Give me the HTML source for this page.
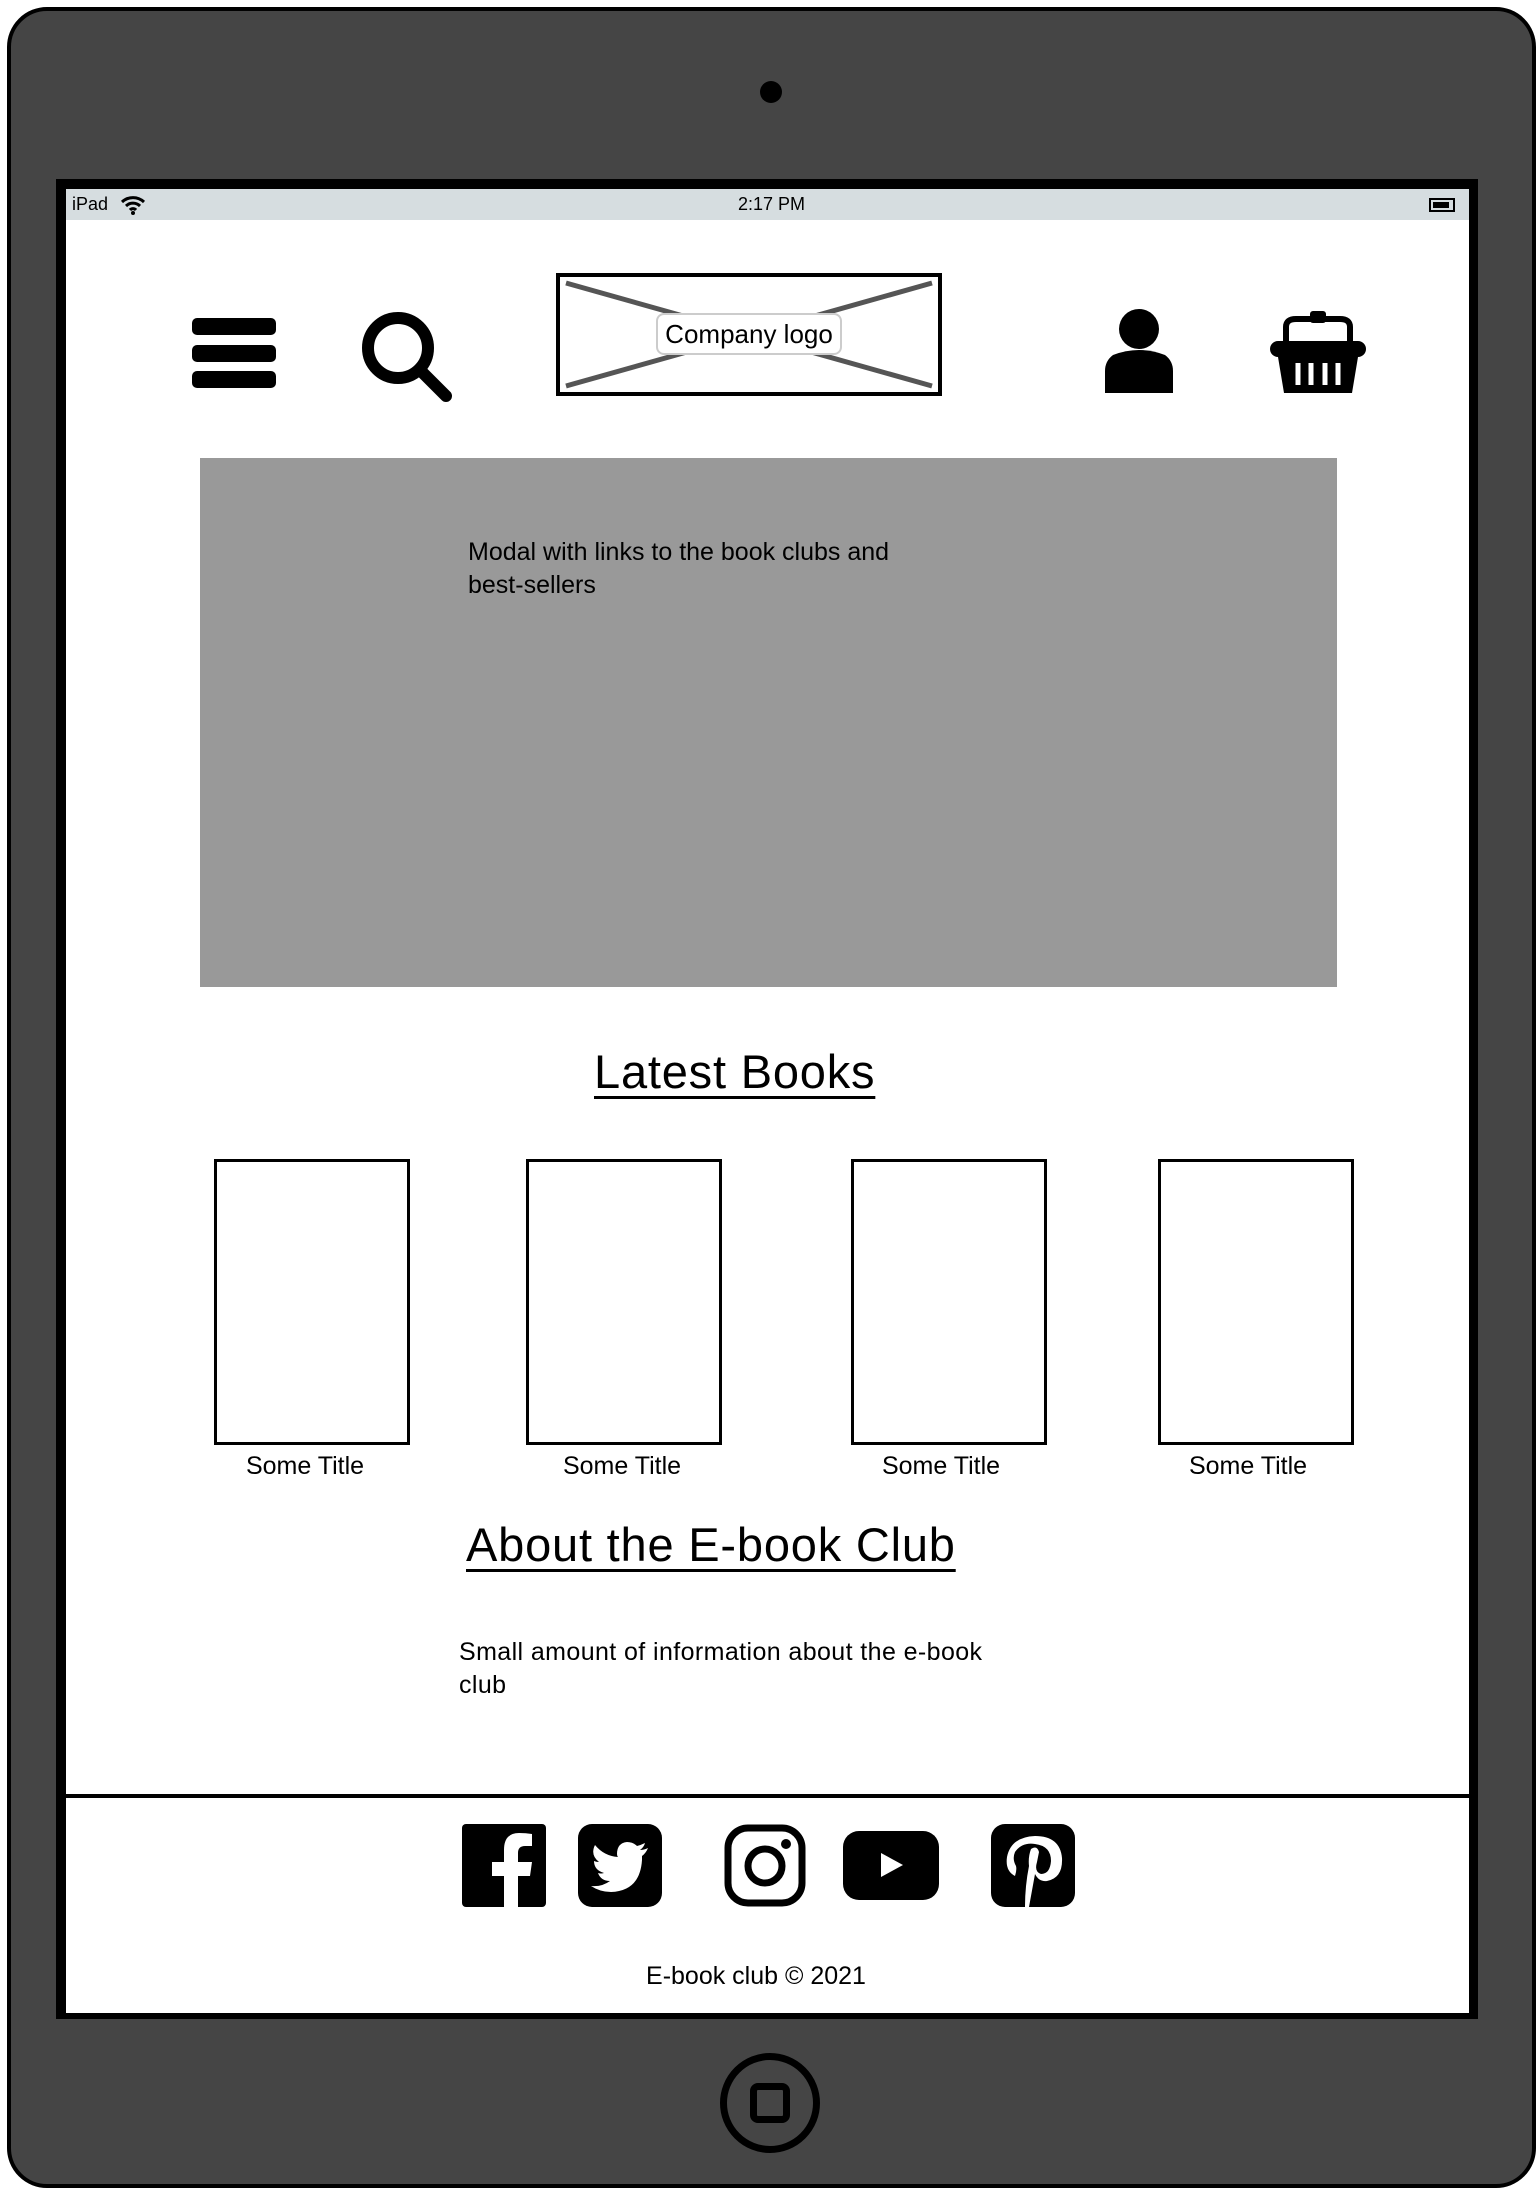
<!DOCTYPE html>
<html><head><meta charset="utf-8"><style>
*{margin:0;padding:0;box-sizing:border-box}
body{width:1540px;height:2192px;background:#fff;position:relative;overflow:hidden;font-family:"Liberation Sans",sans-serif;color:#000}
.a{position:absolute}
.book{position:absolute;top:1159px;width:196px;height:286px;border:3px solid #000;background:#fff}
.t{position:absolute;top:1452px;font-size:25px;width:196px;text-align:center}
h2{position:absolute;font-weight:normal;text-decoration:underline;text-underline-offset:8px;text-decoration-thickness:3px;white-space:nowrap;letter-spacing:0.8px}
</style></head><body>
<div class="a" style="left:7px;top:7px;width:1529px;height:2181px;background:#454545;border:4px solid #000;border-radius:40px"></div>
<div class="a" style="left:760px;top:81px;width:22px;height:22px;border-radius:50%;background:#000"></div>
<div class="a" style="left:56px;top:179px;width:1422px;height:1840px;background:#000"></div>
<div class="a" style="left:66px;top:189px;width:1403px;height:1824px;background:#fff"></div>
<div class="a" style="left:66px;top:189px;width:1403px;height:31px;background:#d6dde0;font-size:18px;line-height:31px">
<span class="a" style="left:6px">iPad</span>
<svg class="a" style="left:54px;top:6px" width="26" height="20" viewBox="0 0 26 20"><path d="M2 7a16 16 0 0 1 22 0M6 11a10 10 0 0 1 14 0M10 15a4 4 0 0 1 6 0" stroke="#000" stroke-width="3" fill="none"/><circle cx="13" cy="18" r="2"/></svg>
<span class="a" style="left:672px">2:17 PM</span>
<div class="a" style="left:1363px;top:9px;width:26px;height:14px;border:2px solid #000"><div style="margin:2px;width:16px;height:6px;background:#000"></div></div>
</div>
<div class="a" style="left:192px;top:318px;width:84px;height:17px;background:#000;border-radius:5px"></div>
<div class="a" style="left:192px;top:345px;width:84px;height:17px;background:#000;border-radius:5px"></div>
<div class="a" style="left:192px;top:371px;width:84px;height:17px;background:#000;border-radius:5px"></div>
<svg class="a" style="left:358px;top:308px" width="96" height="96" viewBox="0 0 96 96"><circle cx="40" cy="40" r="30" stroke="#000" stroke-width="12" fill="none"/><path d="M62 62L88 88" stroke="#000" stroke-width="12" stroke-linecap="round"/></svg>
<div class="a" style="left:556px;top:273px;width:386px;height:123px;border:4px solid #000;background:#fff"></div>
<svg class="a" style="left:562px;top:279px" width="374" height="111"><path d="M4 4L370 107M370 4L4 107" stroke="#555" stroke-width="5"/></svg>
<div class="a" style="left:656px;top:313px;width:186px;height:42px;border:2px solid #ccc;border-radius:8px;background:#fff;font-size:26px;line-height:38px;text-align:center">Company logo</div>
<svg class="a" style="left:1105px;top:309px" width="68" height="84" viewBox="0 0 68 84"><circle cx="34" cy="20" r="20"/><path d="M8 46Q34 36 60 46Q68 52 68 62V84H0V62Q0 52 8 46Z"/></svg>
<svg class="a" style="left:1268px;top:305px" width="100" height="90" viewBox="0 0 100 90"><path d="M18 40V22Q18 14 28 14H72Q82 14 82 22V40" stroke="#000" stroke-width="6" fill="none"/><rect x="42" y="6" width="16" height="12" rx="3"/><rect x="2" y="36" width="96" height="16" rx="8"/><path d="M10 52H90L84 88H16Z"/><path d="M30 58V80M43 58V80M57 58V80M70 58V80" stroke="#fff" stroke-width="5"/></svg>
<div class="a" style="left:200px;top:458px;width:1137px;height:529px;background:#999"></div>
<div class="a" style="left:468px;top:536px;font-size:25px;line-height:33px">Modal with links to the book clubs and<br>best-sellers</div>
<h2 style="left:594px;top:1044px;font-size:47px">Latest Books</h2>
<div class="book" style="left:214px"></div><div class="t" style="left:207px">Some Title</div>
<div class="book" style="left:526px"></div><div class="t" style="left:524px">Some Title</div>
<div class="book" style="left:851px"></div><div class="t" style="left:843px">Some Title</div>
<div class="book" style="left:1158px"></div><div class="t" style="left:1150px">Some Title</div>
<h2 style="left:466px;top:1517px;font-size:47px">About the E-book Club</h2>
<div class="a" style="left:459px;top:1636px;font-size:25px;line-height:33px;letter-spacing:0.4px">Small amount of information about the e-book<br>club</div>
<div class="a" style="left:66px;top:1794px;width:1403px;height:4px;background:#000"></div>
<svg class="a" style="left:462px;top:1824px" width="84" height="83" viewBox="0 0 84 83"><rect width="84" height="83" rx="4"/><path d="M56 83V52H68L70 38H56V29Q56 22 63 22H70V10Q64 9 57 9Q42 9 42 26V38H30V52H42V83Z" fill="#fff"/></svg>
<svg class="a" style="left:578px;top:1824px" width="84" height="83" viewBox="0 0 84 83"><rect width="84" height="83" rx="14"/><path d="M70 24Q66 26 62 26Q66 23 67 19Q63 21 59 22Q55 18 49 18Q39 19 39 30Q39 32 40 33Q26 32 17 21Q12 31 21 38Q18 38 16 37Q16 46 26 49Q23 50 20 49Q23 57 32 57Q24 63 13 62Q22 68 33 68Q62 67 64 36V32Q68 29 70 24Z" fill="#fff"/></svg>
<svg class="a" style="left:724px;top:1824px" width="82" height="83" viewBox="0 0 82 83"><rect x="4" y="4" width="74" height="75" rx="20" stroke="#000" stroke-width="7" fill="none"/><circle cx="41" cy="42" r="17" stroke="#000" stroke-width="7" fill="none"/><circle cx="62" cy="20" r="5"/></svg>
<svg class="a" style="left:843px;top:1831px" width="96" height="69" viewBox="0 0 96 69"><rect width="96" height="69" rx="16"/><path d="M38 22L60 34L38 46Z" fill="#fff"/></svg>
<svg class="a" style="left:991px;top:1824px" width="84" height="83" viewBox="0 0 84 83"><rect width="84" height="83" rx="14"/><path d="M38 83L44 50Q48 58 56 57Q72 54 71 34Q69 12 44 12Q20 13 16 33Q14 47 24 52Q26 46 25 42Q21 35 24 28Q31 18 44 20Q60 22 60 37Q59 50 50 50Q43 48 46 38L48 28Q46 21 40 25Q37 33 38 42Q34 62 34 83Z" fill="#fff"/></svg>
<div class="a" style="left:0;width:1540px;top:1962px;text-align:center;font-size:25px"><span style="position:relative;left:-14px">E-book club © 2021</span></div>
<div class="a" style="left:720px;top:2053px;width:100px;height:100px;border:7px solid #000;border-radius:50%"></div>
<div class="a" style="left:750px;top:2083px;width:40px;height:40px;border:7px solid #000;border-radius:8px"></div>
</body></html>
